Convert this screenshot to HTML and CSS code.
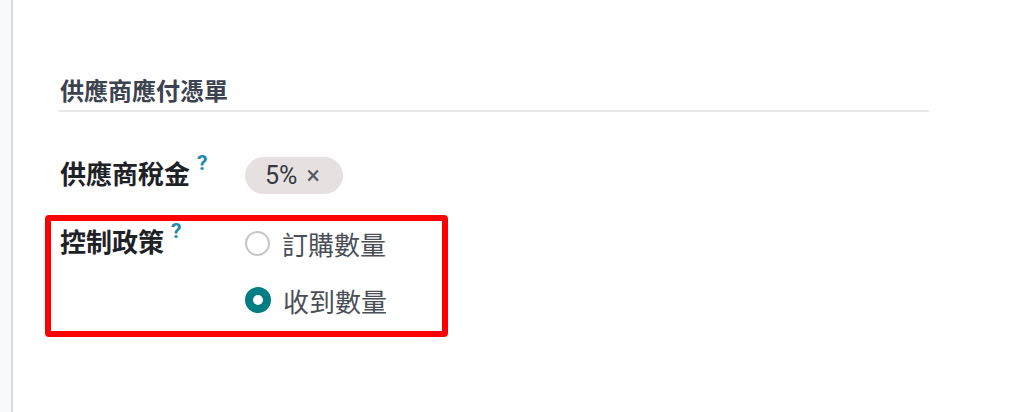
FILE: index.html
```html
<!DOCTYPE html>
<html lang="zh-Hant">
<head>
    <meta charset="UTF-8">
    <meta name="viewport" content="width=device-width, initial-scale=1.0">
    <title>供應商應付憑單</title>
    <link rel="stylesheet" href="styles.css">
</head>
<body>
    <div class="page">
        <aside class="side"></aside>
        <main class="content">
            <h2 class="section-title">供應商應付憑單</h2>

            <div class="form-row tax-row">
                <div class="field-label">供應商稅金<span class="help">?</span></div>
                <div class="field-value">
                    <span class="tag">5%<span class="tag-remove">×</span></span>
                </div>
            </div>

            <div class="form-row policy-row">
                <div class="field-label">控制政策<span class="help">?</span></div>
                <div class="field-value radio-list">
                    <label class="radio-option">
                        <span class="radio"></span>
                        <span class="radio-text">訂購數量</span>
                    </label>
                    <label class="radio-option">
                        <span class="radio checked"></span>
                        <span class="radio-text">收到數量</span>
                    </label>
                </div>
            </div>

            <!-- 標註框 -->
            <div class="highlight"></div>
        </main>
    </div>
</body>
</html>
```

FILE: styles.css
```css
body {
    margin: 0;
    padding: 0;
    background-color: white;
    font-family: Roboto, "Noto Sans CJK TC", sans-serif;
}
.page {
    display: flex;
    height: 412px;
    position: relative;
}
.side {
    width: 11px;
    background-color: #f8f9fb;
    border-right: 2px solid #d9dadc;
}
.content {
    flex: 1;
    padding-left: 45px;
}
.section-title {
    margin: 78px 0 0 0;
    width: 869px;
    padding: 0 0 4px 2px;
    font-size: 24px;
    line-height: 28px;
    font-weight: 600;
    color: #3c4350;
    border-bottom: 2px solid #e8e8e8;
}
.form-row {
    display: flex;
    padding-left: 2px;
}
.tax-row {
    margin-top: 45px;
}
.policy-row {
    margin-top: 31px;
}
.field-label {
    width: 185px;
    display: flex;
    align-items: flex-start;
    font-size: 26px;
    font-weight: 700;
    color: #1e2227;
}
.tax-row .field-label {
    line-height: 37px;
}
.policy-row .field-label {
    line-height: 36px;
}
.help {
    font-size: 21px;
    line-height: 1;
    font-weight: 700;
    color: #1d87ad;
    margin-left: 7px;
    margin-top: -4px;
}
.tag {
    display: inline-flex;
    align-items: center;
    height: 37px;
    padding: 0 23px 0 20px;
    border-radius: 19px;
    background-color: #e7e0e0;
    font-size: 25px;
    color: #333a40;
}
.tag-remove {
    margin-left: 9px;
    font-size: 25px;
    color: #555b61;
}
.radio-list {
    display: flex;
    flex-direction: column;
    gap: 21px;
}
.radio-option {
    display: flex;
    align-items: center;
    height: 36px;
}
.radio {
    box-sizing: border-box;
    width: 25px;
    height: 25px;
    border-radius: 50%;
    border: 2px solid #c6c6c6;
    background-color: white;
}
.radio.checked {
    width: 26px;
    height: 26px;
    border: 8.5px solid #017e84;
}
.radio-text {
    margin-left: 12px;
    font-size: 26px;
    color: #4a4f57;
}
.highlight {
    position: absolute;
    left: 45px;
    top: 215px;
    width: 391px;
    height: 110px;
    border: 6px solid #ff0000;
    border-radius: 4px;
}
```
